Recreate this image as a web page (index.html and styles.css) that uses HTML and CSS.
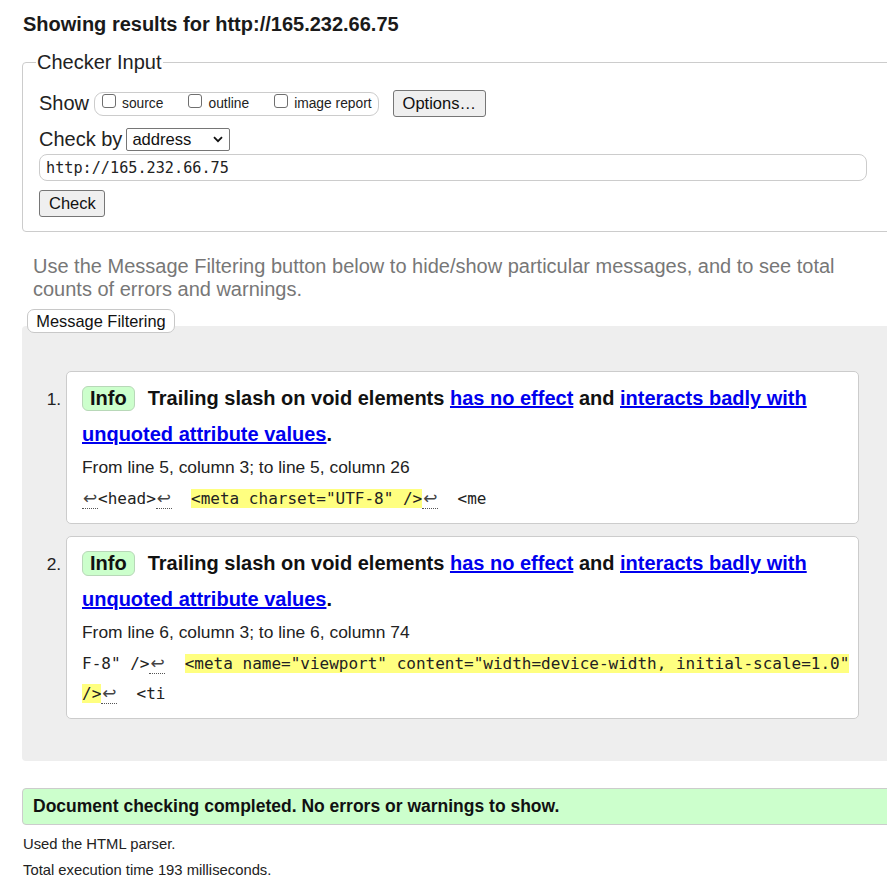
FILE: index.html
```html
<!DOCTYPE html>
<html lang="en">
<head>
<meta charset="utf-8">
<title>Showing results for http://165.232.66.75 - Nu Html Checker</title>
<link rel="stylesheet" href="styles.css">
</head>
<body>
<div class="page">
  <h1 class="title">Showing results for http://165.232.66.75</h1>
  <form class="checker">
    <fieldset class="checker-box">
      <legend class="checker-legend">Checker Input</legend>
      <div class="row row-show">
        <span class="row-label label-show">Show</span>
        <span class="show-box"><label class="opt"><input type="checkbox" class="cb">source</label><label class="opt opt-next"><input type="checkbox" class="cb">outline</label><label class="opt opt-next"><input type="checkbox" class="cb">image report</label></span>
        <button type="button" class="btn btn-options">Options…</button>
      </div>
      <div class="row row-by">
        <span class="row-label label-by">Check by</span>
        <span class="select-wrap">
          <select class="select"><option>address</option></select>
          <svg class="chev" width="10" height="7" viewBox="0 0 10 7" aria-hidden="true"><path d="M1 1.2 L5 5.2 L9 1.2" fill="none" stroke="#111" stroke-width="1.8"/></svg>
        </span>
      </div>
      <input class="url" type="text" value="http://165.232.66.75">
      <div class="row-submit"><button type="button" class="btn btn-check">Check</button></div>
    </fieldset>
  </form>

  <p class="hint">Use the Message Filtering button below to hide/show particular messages, and to see total counts of errors and warnings.</p>
  <button type="button" class="filter-btn">Message Filtering</button>

  <div class="results">
    <ol class="messages">
      <li class="msg">
        <p class="msg-title"><strong class="badge">Info</strong>Trailing slash on void elements <a href="#" class="msg-link">has no effect</a> and <a href="#" class="msg-link">interacts badly with unquoted attribute values</a>.</p>
        <p class="msg-loc">From line 5, column 3; to line 5, column 26</p>
        <p class="msg-code"><span class="lf">↩</span>&lt;head&gt;<span class="lf">↩</span>  <mark class="hl">&lt;meta charset="UTF-8" /&gt;</mark><span class="lf">↩</span>  &lt;me</p>
      </li>
      <li class="msg">
        <p class="msg-title"><strong class="badge">Info</strong>Trailing slash on void elements <a href="#" class="msg-link">has no effect</a> and <a href="#" class="msg-link">interacts badly with unquoted attribute values</a>.</p>
        <p class="msg-loc">From line 6, column 3; to line 6, column 74</p>
        <p class="msg-code">F-8" /&gt;<span class="lf">↩</span>  <mark class="hl">&lt;meta name="viewport" content="width=device-width, initial-scale=1.0"</mark> <mark class="hl">/&gt;</mark><span class="lf">↩</span>  &lt;ti</p>
      </li>
    </ol>
  </div>

  <p class="success">Document checking completed. No errors or warnings to show.</p>
  <p class="meta meta-first">Used the HTML parser.</p>
  <p class="meta">Total execution time 193 milliseconds.</p>
</div>
</body>
</html>
```

FILE: styles.css
```css
html {
  overflow: hidden;
  background: #fff;
}

body {
  margin: 0;
  font-family: "Liberation Sans", Arial, sans-serif;
  color: #222;
}

.page {
  padding-left: 22px;
  width: 1100px;
}

.title {
  margin: 13px 0 0 1px;
  font-size: 20px;
  line-height: 23px;
  font-weight: bold;
  color: #1a1a1a;
}

.checker {
  margin: 0;
}

.checker-box {
  margin: 15px 0 0 0;
  width: 1000px;
  box-sizing: border-box;
  border: 1px solid #ccc;
  border-radius: 4px;
  padding: 0 16px 14px 16px;
  min-width: 0;
}

.checker-legend {
  font-size: 20px;
  line-height: 23px;
  padding: 0 1px;
  margin-left: -3px;
  color: #222;
}

.row {
  display: flex;
  align-items: center;
}

.row-show {
  margin-top: 16px;
  height: 27px;
}

.row-label {
  font-size: 20px;
  line-height: 23px;
}

.label-show {
  margin-right: 5px;
}

.show-box {
  display: inline-block;
  box-sizing: border-box;
  height: 24px;
  border: 1px solid #ccc;
  border-radius: 9px;
  padding: 0 6px 0 7px;
  font-size: 13.8px;
  line-height: 22px;
  white-space: nowrap;
}

.opt {
  display: inline;
}

.opt-next {
  margin-left: 25px;
}

.cb {
  -webkit-appearance: none;
  appearance: none;
  display: inline-block;
  box-sizing: border-box;
  width: 14px;
  height: 14px;
  margin: 0 6px 0 0;
  border: 1px solid #6f6f6f;
  border-radius: 3px;
  background: #fff;
  vertical-align: baseline;
}

.btn {
  box-sizing: border-box;
  height: 27px;
  font-family: "Liberation Sans", Arial, sans-serif;
  font-size: 16.5px;
  color: #111;
  background: #efefef;
  border: 1px solid #767676;
  border-radius: 3px;
  padding: 0 9px;
  line-height: 23px;
}

.btn-options {
  margin-left: 14px;
  width: 93px;
}

.row-by {
  margin-top: 10px;
  height: 24px;
}

.label-by {
  margin-right: 4px;
}

.select-wrap {
  position: relative;
  display: inline-block;
  height: 23px;
}

.select {
  -webkit-appearance: none;
  appearance: none;
  box-sizing: border-box;
  width: 104px;
  height: 23px;
  margin: 0;
  padding: 0 0 0 5px;
  font-family: "Liberation Sans", Arial, sans-serif;
  font-size: 16.6px;
  line-height: 21px;
  color: #111;
  background: #fff;
  border: 1px solid #767676;
  border-radius: 2px;
}

.chev {
  position: absolute;
  left: 87px;
  top: 8px;
  pointer-events: none;
}

.url {
  display: block;
  box-sizing: border-box;
  margin: 3px 0 0 0;
  width: 828px;
  height: 27px;
  padding: 0 6px;
  border: 1px solid #ccc;
  border-radius: 8px;
  font-family: "DejaVu Sans Mono", "Liberation Mono", monospace;
  font-size: 15.2px;
  color: #222;
  background: #fff;
}

.row-submit {
  margin-top: 9px;
  height: 27px;
}

.btn-check {
  width: 66px;
}

.hint {
  margin: 23px 0 0 11px;
  width: 850px;
  font-size: 20px;
  line-height: 23px;
  color: #777;
}

.filter-btn {
  position: relative;
  z-index: 1;
  display: block;
  box-sizing: border-box;
  margin: 8px 0 -7px 5px;
  width: 148px;
  height: 24px;
  padding: 0 8px;
  font-family: "Liberation Sans", Arial, sans-serif;
  font-size: 16.4px;
  line-height: 22px;
  color: #111;
  background: #fff;
  border: 1px solid #c8c8c8;
  border-radius: 7px;
}

.results {
  width: 1000px;
  box-sizing: border-box;
  background: #eee;
  border-radius: 4px;
  padding: 45px 0 42px 44px;
}

.messages {
  margin: 0;
  padding: 0;
  list-style: decimal outside;
}

.msg {
  box-sizing: border-box;
  width: 793px;
  background: #fff;
  border: 1px solid #ccc;
  border-radius: 5px;
  padding: 8px 6px 9px 15px;
  font-size: 17.4px;
  color: #222;
}

.msg + .msg {
  margin-top: 12px;
}

.msg-title {
  margin: 0;
  font-size: 20px;
  line-height: 36px;
  font-weight: bold;
  color: #111;
}

.badge {
  display: inline-block;
  padding: 0 7px;
  margin-right: 13px;
  line-height: 23px;
  background: #ccffcc;
  border: 1px solid #b8d8b8;
  border-radius: 6px;
  color: #111;
}

.msg-link {
  color: #0000ee;
  text-decoration: underline;
}

.msg-loc {
  margin: 3px 0 0 0;
  line-height: 24px;
}

.msg-code {
  margin: 5px 0 0 0;
  font-family: "DejaVu Sans Mono", "Liberation Mono", monospace;
  font-size: 16px;
  line-height: 30px;
  white-space: pre-wrap;
  color: #222;
}

.hl {
  background: #ffff80;
  color: #222;
}

.lf {
  display: inline-block;
  box-sizing: border-box;
  width: 16px;
  padding-left: 1px;
  line-height: 19px;
  font-family: "DejaVu Sans", sans-serif;
  font-size: 17px;
  color: #444;
  border-bottom: 1px dotted #555;
}

.success {
  margin: 27px 0 0 0;
  width: 1000px;
  box-sizing: border-box;
  padding: 7px 10px 8px;
  background: #ccffcc;
  border: 1px solid #ccc;
  border-radius: 4px;
  font-size: 17.5px;
  line-height: 20px;
  font-weight: bold;
  color: #111;
}

.meta {
  margin: 0 0 0 1px;
  font-size: 14.8px;
  line-height: 26px;
  color: #222;
}

.meta-first {
  margin-top: 6px;
}
```
